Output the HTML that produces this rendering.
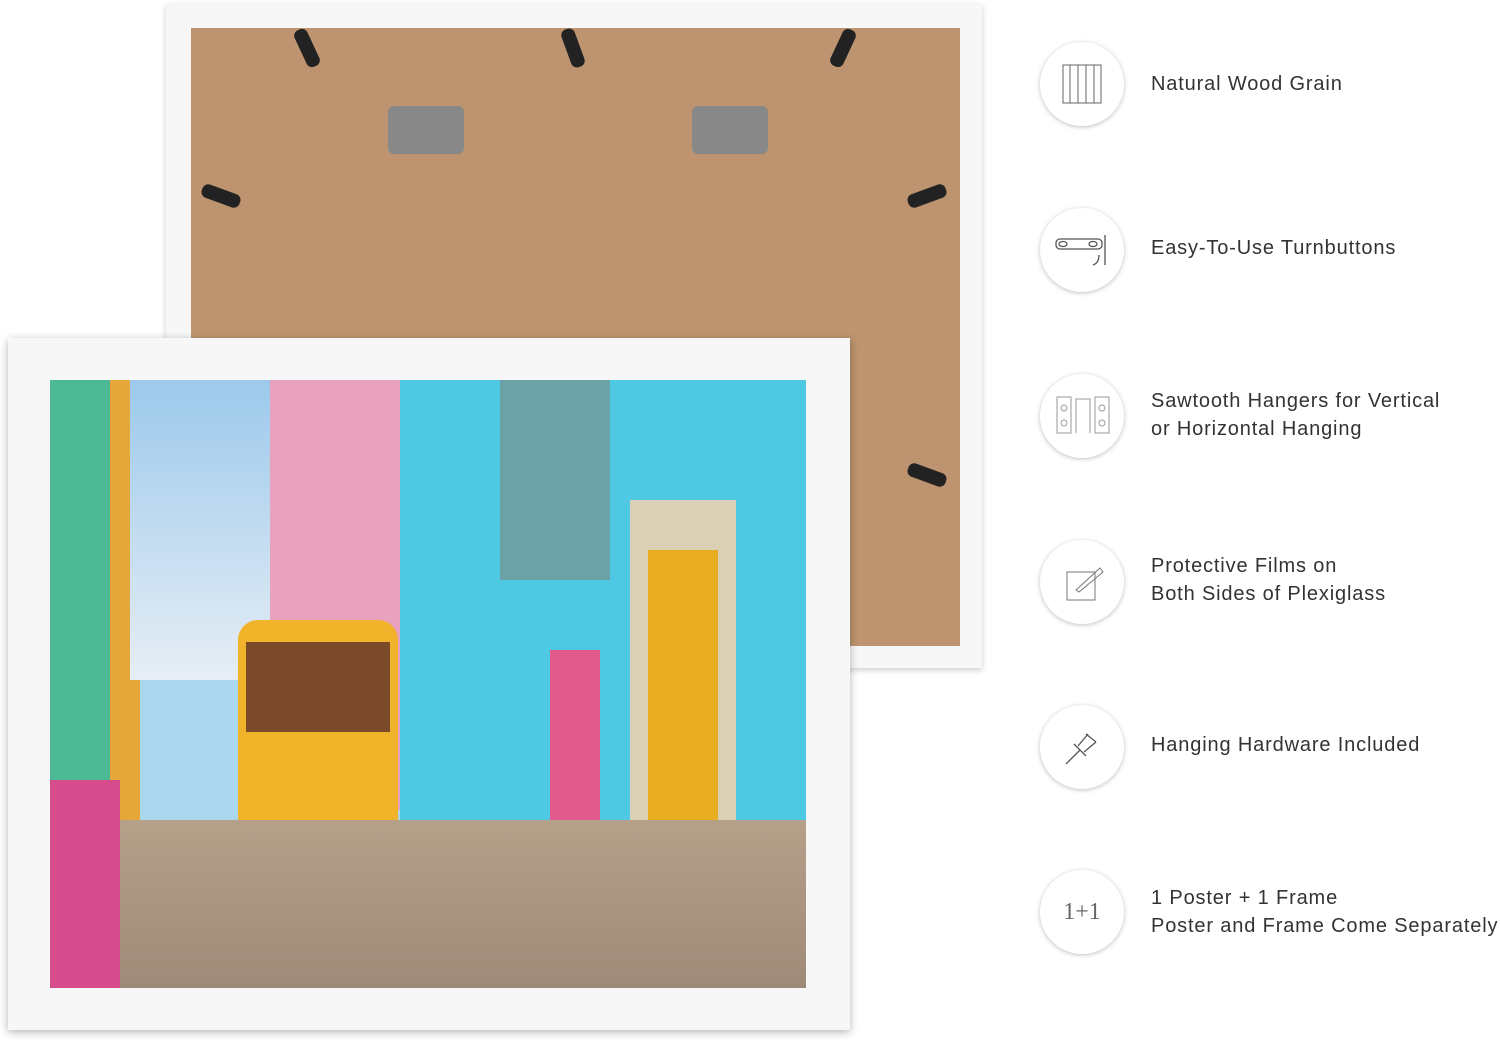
<!DOCTYPE html>
<html><head><style>
body{margin:0;width:1500px;height:1050px;background:#fff;position:relative;overflow:hidden;font-family:"Liberation Sans",sans-serif}
.a{position:absolute}
.c{position:absolute;left:1040px;width:84px;height:84px;border-radius:50%;background:#fff;box-shadow:0 1px 5px rgba(0,0,0,.25)}
.t{position:absolute;left:1151px;font-size:20px;color:#333;line-height:28px;letter-spacing:.85px}
.clip{position:absolute;width:14px;height:40px;background:#222;border-radius:6px}
</style></head><body>
<div class="a" style="left:166px;top:4px;width:816px;height:664px;background:#f7f7f7;box-shadow:0 2px 6px rgba(0,0,0,.2)"></div>
<div class="a" style="left:191px;top:28px;width:769px;height:618px;background:#bd946f"></div>
<div class="clip" style="left:300px;top:28px;transform:rotate(-25deg)"></div>
<div class="clip" style="left:566px;top:28px;transform:rotate(-20deg)"></div>
<div class="clip" style="left:836px;top:28px;transform:rotate(25deg)"></div>
<div class="clip" style="left:214px;top:176px;transform:rotate(-70deg)"></div>
<div class="clip" style="left:920px;top:176px;transform:rotate(70deg)"></div>
<div class="clip" style="left:920px;top:455px;transform:rotate(-70deg)"></div>
<div class="a" style="left:388px;top:106px;width:76px;height:48px;background:#888;border-radius:6px"></div>
<div class="a" style="left:692px;top:106px;width:76px;height:48px;background:#888;border-radius:6px"></div>
<div class="a" style="left:8px;top:338px;width:842px;height:692px;background:#f7f7f7;box-shadow:0 2px 8px rgba(0,0,0,.3)"></div>
<div class="a" style="left:50px;top:380px;width:756px;height:608px;background:#aad6ee;overflow:hidden">
 <div class="a" style="left:0;top:0;width:80px;height:608px;background:#4cb894"></div>
 <div class="a" style="left:60px;top:0;width:30px;height:480px;background:#e5a73a"></div>
 <div class="a" style="left:80px;top:0;width:180px;height:300px;background:linear-gradient(#9cc9ec,#e7eef5)"></div>
 <div class="a" style="left:220px;top:0;width:140px;height:430px;background:#e9a2bd"></div>
 <div class="a" style="left:350px;top:0;width:406px;height:460px;background:#4fc8e4"></div>
 <div class="a" style="left:580px;top:120px;width:106px;height:410px;background:#d9d0b6"></div>
 <div class="a" style="left:598px;top:170px;width:70px;height:350px;background:#e8ad23"></div>
 <div class="a" style="left:500px;top:270px;width:50px;height:170px;background:#e05b8b"></div>
 <div class="a" style="left:450px;top:0;width:110px;height:200px;background:#8a7a65;opacity:.5"></div>
 <div class="a" style="left:188px;top:240px;width:160px;height:230px;background:#f0b32a;border-radius:20px 20px 4px 4px"></div>
 <div class="a" style="left:196px;top:262px;width:144px;height:90px;background:#7a4a2a"></div>
 <div class="a" style="left:0;top:440px;width:756px;height:168px;background:linear-gradient(#b5a089,#9e8a78)"></div>
 <div class="a" style="left:0;top:400px;width:70px;height:208px;background:#d64c8c"></div>
</div>
<div class="c" style="top:42px"></div><div class="t" style="top:70px">Natural Wood Grain</div>
<div class="c" style="top:208px"></div><div class="t" style="top:234px">Easy-To-Use Turnbuttons</div>
<div class="c" style="top:374px"></div><div class="t" style="top:387px">Sawtooth Hangers for Vertical<br>or Horizontal Hanging</div>
<div class="c" style="top:540px"></div><div class="t" style="top:552px">Protective Films on<br>Both Sides of Plexiglass</div>
<div class="c" style="top:705px"></div><div class="t" style="top:731px">Hanging Hardware Included</div>
<div class="c" style="top:870px;font:24px 'Liberation Serif',serif;color:#666;text-align:center;line-height:84px">1+1</div><div class="t" style="top:884px">1 Poster + 1 Frame<br>Poster and Frame Come Separately</div>
<svg class="a" style="left:1062px;top:64px" width="40" height="40" fill="none" stroke="#666"><rect x="1" y="1" width="38" height="38"/><path d="M8 1v38M16 1v38M24 1v38M32 1v38"/></svg>
<svg class="a" style="left:1055px;top:235px" width="56" height="34" fill="none" stroke="#555" stroke-width="1.3"><rect x="1" y="4" width="46" height="10" rx="4"/><ellipse cx="8" cy="9" rx="4" ry="2.5"/><ellipse cx="38" cy="9" rx="4" ry="2.5"/><path d="M50 0v30M44 20q0 8-6 10"/></svg>
<svg class="a" style="left:1056px;top:396px" width="54" height="40" fill="none" stroke="#999"><rect x="1" y="1" width="14" height="36"/><rect x="39" y="1" width="14" height="36"/><path d="M20 37V3h14v34"/><circle cx="8" cy="12" r="3"/><circle cx="8" cy="27" r="3"/><circle cx="46" cy="12" r="3"/><circle cx="46" cy="27" r="3"/></svg>
<svg class="a" style="left:1064px;top:562px" width="40" height="40" fill="none" stroke="#777"><rect x="3" y="10" width="28" height="28"/><path d="M12 28l24-22 3 4-24 20z"/></svg>
<svg class="a" style="left:1064px;top:728px" width="38" height="38" fill="none" stroke="#555" stroke-width="1.3"><path d="M2 36l14-14M10 16l12 12M14 18l10-12M20 24l12-10M22 6l10 8"/></svg>
</body></html>
